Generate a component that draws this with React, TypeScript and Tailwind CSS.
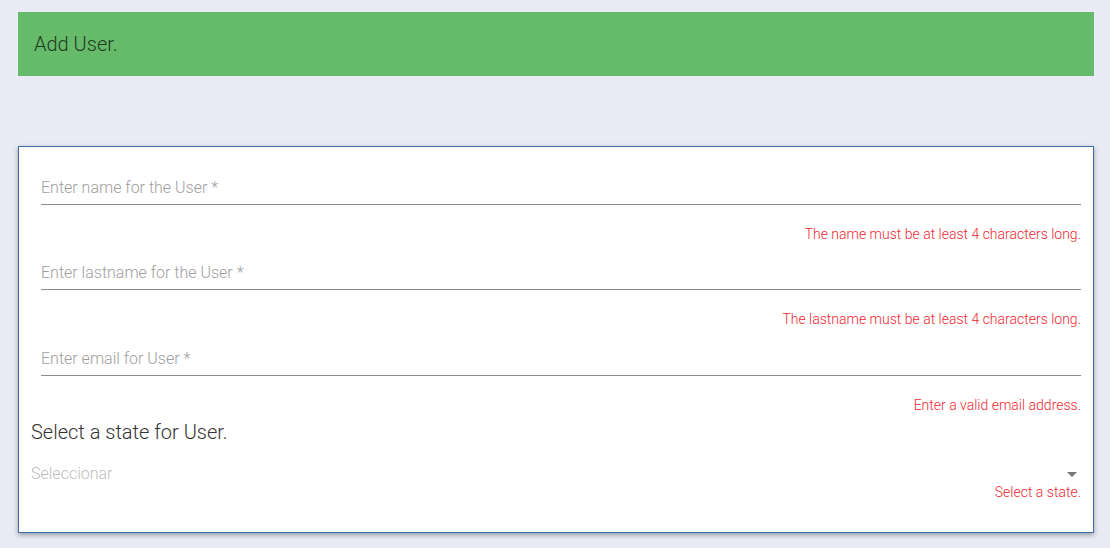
export default function App() {
  const fields = [
    { label: 'Enter name for the User *', error: 'The name must be at least 4 characters long.', gap: 'mb-[21px]' },
    { label: 'Enter lastname for the User *', error: 'The lastname must be at least 4 characters long.', gap: 'mb-[22px]' },
    { label: 'Enter email for User *', error: 'Enter a valid email address.', gap: 'mb-[21px]' },
  ]

  return (
    <div className="min-h-[548px] bg-[#e8eaf6] pt-3 pl-[18px] pr-4 pb-4 font-['Roboto',sans-serif] font-light">
      {/* Header bar */}
      <div className="h-16 bg-[#66bb6a] flex items-center px-4">
        <h1 className="text-[20px] text-[#1e3a1e] font-light">Add User.</h1>
      </div>

      {/* Form card */}
      <div className="mt-[70px] bg-white border border-[#3d6fa8] shadow-[0_2px_5px_rgba(0,0,0,0.35)] pt-[31px] pb-[32px]">
        {fields.map((field, index) => (
          <div key={index} className={`pl-[22px] pr-3 ${field.gap}`}>
            <div className="border-b border-[#8a8a8a] pb-[6px]">
              <div className="h-5 leading-5 text-[16px] text-[#9e9e9e]">{field.label}</div>
            </div>
            <div className="mt-[21px] h-4 leading-4 text-[14px] text-right text-[#f0262f]">{field.error}</div>
          </div>
        ))}

        {/* State select */}
        <div className="pl-3 pr-3 -mt-[14px]">
          <div className="h-6 leading-6 text-[20px] text-[#333333]">Select a state for User.</div>
          <div className="mt-[20px] flex items-center justify-between h-5 pr-[4px]">
            <span className="text-[16px] text-[#bdbdbd] leading-5">Seleccionar</span>
            <svg width="10" height="5" viewBox="0 0 10 5">
              <path d="M0 0 L10 0 L5 5 Z" fill="#757575" />
            </svg>
          </div>
          <div className="h-4 leading-4 text-[14px] text-right text-[#f0262f]">Select a state.</div>
        </div>
      </div>
    </div>
  )
}
